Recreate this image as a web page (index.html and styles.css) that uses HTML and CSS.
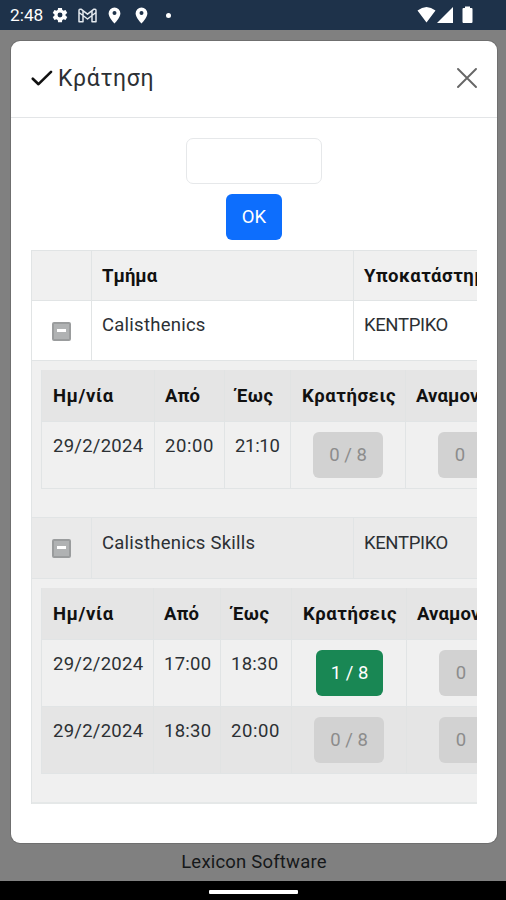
FILE: index.html
```
<!DOCTYPE html>
<html lang="el">
<head>
<meta charset="UTF-8">
<meta name="viewport" content="width=device-width, initial-scale=1.0">
<title>Κράτηση</title>
<link rel="stylesheet" href="styles.css">
</head>
<body>
<div class="status-bar">
  <span class="clock">2:48</span>
  <svg class="gear" width="18" height="18" viewBox="0 0 24 24"><path fill="#fff" fill-rule="evenodd" d="M19.4 13a7.500 7.500 0 0 0 0-2l2.300-1.700-2.300-4-2.700 1.100a7.500 7.500 0 0 0-1.700-1L14.600 2.500h-5.200L9 5.400a7.500 7.500 0 0 0-1.700 1L4.600 5.300l-2.300 4L4.600 11a7.500 7.500 0 0 0 0 2l-2.300 1.700 2.300 4 2.700-1.100a7.500 7.500 0 0 0 1.700 1l.4 2.900h5.200l.4-2.900a7.500 7.500 0 0 0 1.700-1l2.700 1.100 2.300-4zM12 15.300a3.300 3.300 0 1 1 0-6.600 3.300 3.300 0 0 1 0 6.600z"/></svg>
  <svg class="mail" width="19" height="15" viewBox="0 0 19 15"><path fill="none" stroke="#e4e9ee" stroke-width="1.500" stroke-linejoin="round" d="M1 13.800V2.800Q1 .8 3 1.200L9.500 6.200 16 1.200Q18 .8 18 2.800V13.800H14V7.500L9.500 11 5 7.500V13.800ZM5 7.500V3M14 7.500V3M1 4.500l4 3M18 4.500l-4 3"/></svg>
  <svg class="pin" width="13" height="17" viewBox="0 0 13 17"><path fill="#fff" fill-rule="evenodd" d="M6.500.5a5.900 5.900 0 0 0-5.900 5.900C.6 10.500 6.500 16.500 6.500 16.500s5.900-6 5.900-10.100A5.900 5.900 0 0 0 6.500.5zm0 7.600a2 2 0 1 1 0-4 2 2 0 0 1 0 4z"/></svg>
  <svg class="pin second" width="13" height="17" viewBox="0 0 13 17"><path fill="#fff" fill-rule="evenodd" d="M6.500.5a5.900 5.900 0 0 0-5.900 5.900C.6 10.500 6.500 16.500 6.500 16.500s5.900-6 5.900-10.100A5.900 5.900 0 0 0 6.500.5zm0 7.600a2 2 0 1 1 0-4 2 2 0 0 1 0 4z"/></svg>
  <span class="dot"></span>
  <svg class="signals" width="56" height="18" viewBox="0 0 56 18"><path fill="#fff" d="M.5 4.500Q9.500-2.500 18.500 4.500L9.500 16.500ZM20 17 36 1v16ZM46.500 2h1.500V.5h5V2h1.500q1 0 1 1v13q0 1-1 1h-8q-1 0-1-1V3q0-1 1-1Z"/></svg>
</div>

<div class="backdrop">
  <div class="modal">
    <div class="modal-header">
      <svg class="check" width="22" height="16" viewBox="0 0 22 16"><path fill="none" stroke="#111" stroke-width="2.600" stroke-linecap="round" stroke-linejoin="round" d="M1.800 8.700 7.500 14.200 20 1.800"/></svg>
      <h5 class="modal-title">Κράτηση</h5>
      <svg class="close" width="20" height="20" viewBox="0 0 20 20"><path fill="none" stroke="#666" stroke-width="1.900" stroke-linecap="round" d="M1 1l18 18M19 1 1 19"/></svg>
    </div>
    <div class="modal-body">
      <input class="code" type="text">
      <button class="btn btn-ok">OK</button>

      <div class="table-wrap">
        <table class="main-table">
          <colgroup><col class="c-toggle"><col class="c-class"><col class="c-branch"></colgroup>
          <tr class="head"><th></th><th>Τμήμα</th><th class="branch">Υποκατάστημα</th></tr>
          <tr class="item"><td><span class="toggle"></span></td><td>Calisthenics</td><td class="branch">ΚΕΝΤΡΙΚΟ</td></tr>
          <tr class="detail first">
            <td colspan="3">
              <table class="sub-table">
                <colgroup><col class="s-date"><col class="s-from"><col class="s-to"><col class="s-book"><col class="s-wait"></colgroup>
                <tr><th>Ημ/νία</th><th class="tight">Από</th><th>Έως</th><th>Κρατήσεις</th><th class="tight">Αναμονή</th></tr>
                <tr><td>29/2/2024</td><td class="loose">20:00</td><td class="narrow">21:10</td><td class="mid"><button class="btn count">0 / 8</button></td><td class="mid"><button class="btn wait">0</button></td></tr>
              </table>
            </td>
          </tr>
          <tr class="item alt"><td><span class="toggle"></span></td><td>Calisthenics Skills</td><td class="branch">ΚΕΝΤΡΙΚΟ</td></tr>
          <tr class="detail last">
            <td colspan="3">
              <table class="sub-table wide">
                <colgroup><col class="s-date"><col class="s-from"><col class="s-to"><col class="s-book"><col class="s-wait"></colgroup>
                <tr><th>Ημ/νία</th><th class="tight">Από</th><th>Έως</th><th>Κρατήσεις</th><th class="tight">Αναμονή</th></tr>
                <tr><td>29/2/2024</td><td>17:00</td><td>18:30</td><td class="mid"><button class="btn count booked">1 / 8</button></td><td class="mid"><button class="btn wait">0</button></td></tr>
                <tr class="alt"><td>29/2/2024</td><td>18:30</td><td class="loose">20:00</td><td class="mid"><button class="btn count">0 / 8</button></td><td class="mid"><button class="btn wait">0</button></td></tr>
              </table>
            </td>
          </tr>
        </table>
      </div>
    </div>
  </div>
  <div class="footer">Lexicon Software</div>
</div>
<div class="nav-bar"><span class="handle"></span></div>
</body>
</html>
```
FILE: styles.css
```
* {
  box-sizing: border-box;
}
body {
  margin: 0;
  width: 506px;
  height: 900px;
  overflow: hidden;
  display: flex;
  flex-direction: column;
  font-family: Roboto, "Noto Sans", sans-serif;
  font-size: 18.5px;
  color: #2c3034;
}
svg {
  display: block;
  flex: none;
}
.status-bar {
  height: 30px;
  background: #1e324a;
  display: flex;
  align-items: center;
  padding: 0 33px 0 10px;
  flex: none;
}
.clock {
  width: 41px;
  font-size: 17.3px;
  color: #fff;
}
.mail {
  margin-left: 9px;
}
.pin {
  margin-left: 11px;
}
.pin.second {
  margin-left: 14px;
}
.dot {
  width: 5px;
  height: 5px;
  border-radius: 50%;
  background: #fff;
  margin-left: 18px;
}
.signals {
  margin-left: auto;
}
.backdrop {
  flex: 1;
  background: #808080;
  padding: 11px 9px 0 11px;
}
.modal {
  height: 802px;
  background: #fff;
  border-radius: 9px;
  box-shadow: 0 0 0 1px #6f6f6f;
}
.modal-header {
  height: 77px;
  display: flex;
  align-items: center;
  border-bottom: 1px solid #e3e5e7;
  padding: 0 20px 2px;
}
.modal-title {
  margin: 0 0 0 5px;
  font-size: 23px;
  font-weight: 400;
  letter-spacing: 0.65px;
}
.close {
  margin-left: auto;
}
.modal-body {
  padding: 20px 20px 0;
  display: flex;
  flex-direction: column;
  align-items: center;
}
.code {
  width: 136px;
  height: 46px;
  border: 1px solid #e6e8ea;
  border-radius: 7px;
  background: #fff;
  margin-bottom: 10px;
}
.btn {
  display: block;
  height: 46px;
  border: 0;
  border-radius: 6px;
  padding: 0;
  font-family: inherit;
  font-size: 18.5px;
}
.btn-ok {
  width: 56px;
  background: #0d6efd;
  color: #fff;
  margin-bottom: 10px;
}
.table-wrap {
  width: 446px;
  overflow: hidden;
}
table {
  table-layout: fixed;
  border-collapse: separate;
  border-spacing: 0;
}
th, td {
  padding: 0 0 0 10px;
  text-align: left;
  white-space: nowrap;
  border-right: 1px solid #e1e4e5;
  border-bottom: 1px solid #e1e4e5;
}
th {
  color: #111;
  font-weight: 700;
}
td {
  vertical-align: top;
  line-height: 22px;
  letter-spacing: 0.25px;
}
.main-table {
  width: 510px;
  border-left: 1px solid #e1e4e5;
  border-top: 1px solid #e1e4e5;
}
.c-toggle {
  width: 60px;
}
.c-class {
  width: 262px;
}
.head th {
  height: 50px;
  background: #f0f0f0;
}
.head .branch {
  letter-spacing: 0.45px;
}
.item > td {
  height: 60px;
  padding-top: 13px;
}
.item .branch {
  letter-spacing: -0.4px;
}
.item.alt > td {
  height: 61px;
  padding-top: 14px;
  background: #eaeaea;
}
.toggle {
  display: block;
  width: 19px;
  height: 19px;
  margin: 8px 0 0 10px;
  border: 2px solid #9a9c9d;
  border-radius: 2px;
  background: linear-gradient(#fff, #fff) center 5px / 9px 3px no-repeat, #b0b2b3;
}
.item.alt .toggle {
  margin-top: 7px;
}
.detail > td {
  background: #f0f0f0;
  padding: 9px 0 0 9px;
}
.detail.first > td {
  height: 157px;
}
.detail.last > td {
  height: 225px;
  border-bottom: 2px solid #e5e8e8;
}
.sub-table {
  width: 500px;
  border-left: 1px solid #e1e4e5;
}
.s-date {
  width: 113px;
}
.s-from {
  width: 70px;
}
.s-to {
  width: 66px;
}
.s-book {
  width: 115px;
}
.wide .s-date {
  width: 112px;
}
.wide .s-from {
  width: 67px;
}
.wide .s-to {
  width: 71px;
}
.wide .s-book {
  width: 115px;
}
.sub-table th {
  height: 52px;
  padding-left: 11px;
  background: #e5e5e5;
  border-right-color: #e1e3e3;
  letter-spacing: 0.55px;
}
.sub-table th.tight {
  padding-left: 10px;
  letter-spacing: 0.1px;
}
.sub-table td {
  height: 67px;
  padding-top: 13px;
}
.sub-table td:first-child {
  padding-left: 11px;
}
.sub-table .loose {
  letter-spacing: 0.6px;
}
.sub-table .narrow {
  letter-spacing: -0.3px;
}
.sub-table .alt td {
  background: #e5e5e5;
  border-right-color: #e1e3e3;
}
.sub-table .mid {
  padding: 10px 0 0 22px;
}
.sub-table .mid:last-child {
  padding-left: 32px;
}
.count {
  width: 70px;
  background: #d2d2d2;
  color: #8c8c8c;
}
.count.booked {
  width: 67px;
  margin-left: 2px;
  background: #198754;
  color: #fff;
}
.wait {
  width: 44px;
  background: #d2d2d2;
  color: #8c8c8c;
}
.footer {
  text-align: center;
  line-height: 22px;
  padding-top: 8px;
  letter-spacing: 0.2px;
  color: #16181a;
}
.nav-bar {
  height: 19px;
  background: #000;
  display: flex;
  justify-content: center;
  padding-top: 9px;
  flex: none;
}
.handle {
  width: 89px;
  height: 4px;
  background: #fff;
  border-radius: 1px;
}
```
